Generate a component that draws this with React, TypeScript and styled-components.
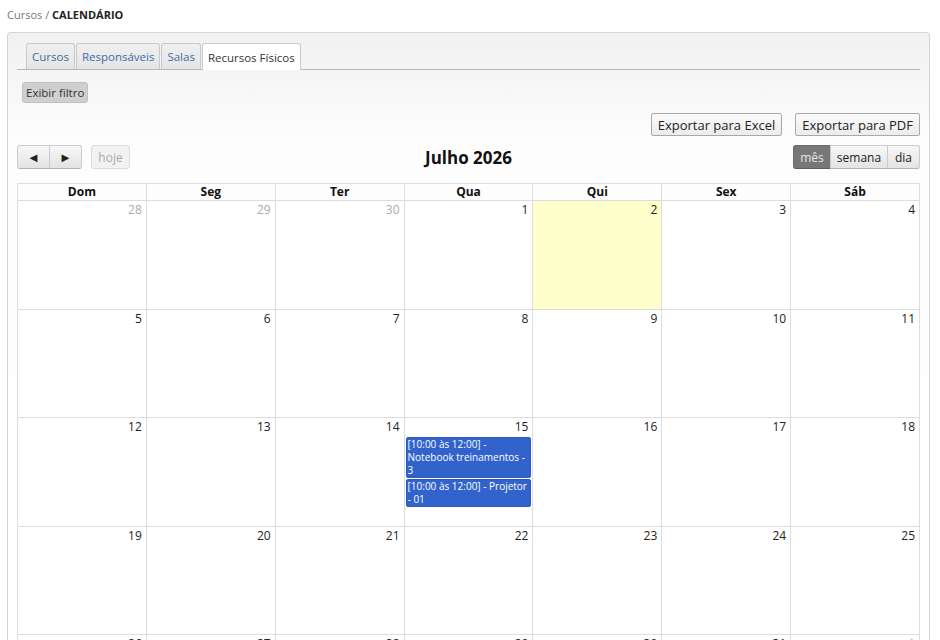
import React from "react";
import styled, { createGlobalStyle } from "styled-components";

const GlobalStyle = createGlobalStyle`
	body {
		margin: 0;
		background: #fff;
		font-family: "Open Sans", "Noto Sans", sans-serif;
		color: #333;
		overflow: hidden;
	}
`;

const Breadcrumb = styled.div`
	padding: 7px 7px 0;
	height: 32px;
	box-sizing: border-box;
	font-size: 11px;
	color: #777;
	b {
		color: #222;
		font-weight: 700;
	}
`;

const Panel = styled.section`
	margin: 0 10px 0 7px;
	border: 1px solid #d4d4d4;
	border-bottom: none;
	border-radius: 4px 4px 0 0;
	background: linear-gradient(#f1f1f1, #fdfdfd 110px, #fff);
	padding: 10px 9px 0;
	height: 608px;
	box-sizing: border-box;
	overflow: hidden;
`;

const TabBar = styled.nav`
	display: flex;
	padding-left: 9px;
	border-bottom: 1px solid #b9b9b9;
`;

const Tab = styled.a<{ $active?: boolean }>`
	box-sizing: border-box;
	padding: 0 5px;
	display: flex;
	align-items: center;
	font-size: 11.5px;
	border: 1px solid #c8c8c8;
	border-bottom: none;
	margin-right: 1px;
	border-radius: 3px 3px 0 0;
	color: ${(p) => (p.$active ? "#333" : "#3a6ea5")};
	background: ${(p) => (p.$active ? "#fff" : "linear-gradient(#f0f0f0, #e4e4e4)")};
	margin-bottom: ${(p) => (p.$active ? "-1px" : "0")};
	height: ${(p) => (p.$active ? "27px" : "26px")};
`;

const FilterButton = styled.button`
	display: block;
	margin: 12px 0 0 5px;
	height: 21px;
	padding: 0 3px;
	border: 1px solid #c0c0c0;
	border-radius: 3px;
	background: #cfcfcf;
	font-family: inherit;
	font-size: 11.5px;
	color: #333;
`;

const ExportRow = styled.div`
	display: flex;
	justify-content: flex-end;
	gap: 13px;
	margin-top: 10px;
`;

const ExportButton = styled.button`
	height: 23px;
	padding: 0 6px;
	border: 1px solid #a8a8a8;
	border-radius: 2px;
	background: linear-gradient(#fafafa, #ececec);
	font-family: inherit;
	font-size: 13px;
	color: #222;
`;

const Toolbar = styled.div`
	display: grid;
	grid-template-columns: 1fr auto 1fr;
	align-items: center;
	margin-top: 9px;
	height: 24px;
`;

const Group = styled.div<{ $end?: boolean }>`
	display: flex;
	align-items: center;
	justify-content: ${(p) => (p.$end ? "flex-end" : "flex-start")};
`;

const Seg = styled.button<{ $active?: boolean; $first?: boolean; $last?: boolean; $w: number; $size?: number }>`
	width: ${(p) => p.$w}px;
	height: 24px;
	padding: 0;
	margin-left: -1px;
	border: 1px solid ${(p) => (p.$active ? "#6a6a6a" : "#cacaca")};
	border-bottom-color: ${(p) => (p.$active ? "#5e5e5e" : "#b3b3b3")};
	border-radius: ${(p) => `${p.$first ? 3 : 0}px ${p.$last ? 3 : 0}px ${p.$last ? 3 : 0}px ${p.$first ? 3 : 0}px`};
	background: ${(p) => (p.$active ? "#777" : "linear-gradient(#f7f7f7, #e3e3e3)")};
	color: ${(p) => (p.$active ? "#e8e8e8" : "#222")};
	font-family: inherit;
	font-size: ${(p) => p.$size ?? 12}px;
	&:first-child {
		margin-left: 0;
	}
`;

const TodayButton = styled.button`
	margin-left: 9px;
	width: 39px;
	height: 24px;
	padding: 0;
	border: 1px solid #dcdcdc;
	border-radius: 3px;
	background: #f2f2f2;
	color: #aaa;
	font-family: inherit;
	font-size: 12px;
`;

const Title = styled.h2`
	margin: 0;
	font-size: 17px;
	font-weight: 700;
	color: #111;
`;

const Grid = styled.div`
	margin-top: 14px;
	display: grid;
	grid-template-columns: repeat(7, 1fr);
	border-left: 1px solid #ddd;
`;

const HeadCell = styled.div`
	height: 16px;
	border-top: 1px solid #ddd;
	border-right: 1px solid #ddd;
	border-bottom: 1px solid #ddd;
	font-size: 12px;
	font-weight: 700;
	text-align: center;
	line-height: 15px;
	color: #111;
`;

const DayCell = styled.div<{ $today?: boolean }>`
	box-sizing: border-box;
	height: 108.6px;
	border-right: 1px solid #ddd;
	border-bottom: 1px solid #ddd;
	background: ${(p) => (p.$today ? "#ffffcc" : "#fff")};
	display: flex;
	flex-direction: column;
	padding: 1px 1px 0;
	min-width: 0;
`;

const DayNum = styled.div<{ $other?: boolean }>`
	text-align: right;
	padding-right: 3px;
	font-size: 12px;
	line-height: 16px;
	color: ${(p) => (p.$other ? "#aaa" : "#222")};
`;

const Event = styled.div`
	margin-top: 2px;
	background: #3263cc;
	border: 1px solid #2d5bbd;
	border-radius: 2px;
	color: #fff;
	font-size: 10px;
	line-height: 13px;
	padding: 0 1px;
	& + & {
		margin-top: 1px;
	}
`;

const weekDays = ["Dom", "Seg", "Ter", "Qua", "Qui", "Sex", "Sáb"];

type Day = { n: number; other?: boolean; today?: boolean; events?: string[] };

const buildDays = (): Day[] => {
	const days: Day[] = [];
	[28, 29, 30].forEach((n) => days.push({ n, other: true }));
	for (let n = 1; n <= 31; n++) days.push({ n });
	days.push({ n: 1, other: true });
	days[4].today = true;
	days[17].events = [
		"[10:00 às 12:00] - Notebook treinamentos - 3",
		"[10:00 às 12:00] - Projetor - 01",
	];
	return days;
};

export default function App() {
	const days = buildDays();
	return (
		<>
			<GlobalStyle />
			<Breadcrumb>
				Cursos / <b>CALENDÁRIO</b>
			</Breadcrumb>
			<Panel>
				<TabBar>
					<Tab>Cursos</Tab>
					<Tab>Responsáveis</Tab>
					<Tab>Salas</Tab>
					<Tab $active>Recursos Físicos</Tab>
				</TabBar>
				<FilterButton>Exibir filtro</FilterButton>
				<ExportRow>
					<ExportButton>Exportar para Excel</ExportButton>
					<ExportButton>Exportar para PDF</ExportButton>
				</ExportRow>
				<Toolbar>
					<Group>
						<Seg $first $w={33} $size={13}>◄</Seg>
						<Seg $last $w={33} $size={13}>►</Seg>
						<TodayButton>hoje</TodayButton>
					</Group>
					<Title>Julho 2026</Title>
					<Group $end>
						<Seg $first $active $w={38}>mês</Seg>
						<Seg $w={58}>semana</Seg>
						<Seg $last $w={33}>dia</Seg>
					</Group>
				</Toolbar>
				<Grid>
					{weekDays.map((d) => (
						<HeadCell key={d}>{d}</HeadCell>
					))}
					{days.map((d, i) => (
						<DayCell key={i} $today={d.today}>
							<DayNum $other={d.other}>{d.n}</DayNum>
							{d.events?.map((e) => (
								<Event key={e}>{e}</Event>
							))}
						</DayCell>
					))}
				</Grid>
			</Panel>
		</>
	);
}
